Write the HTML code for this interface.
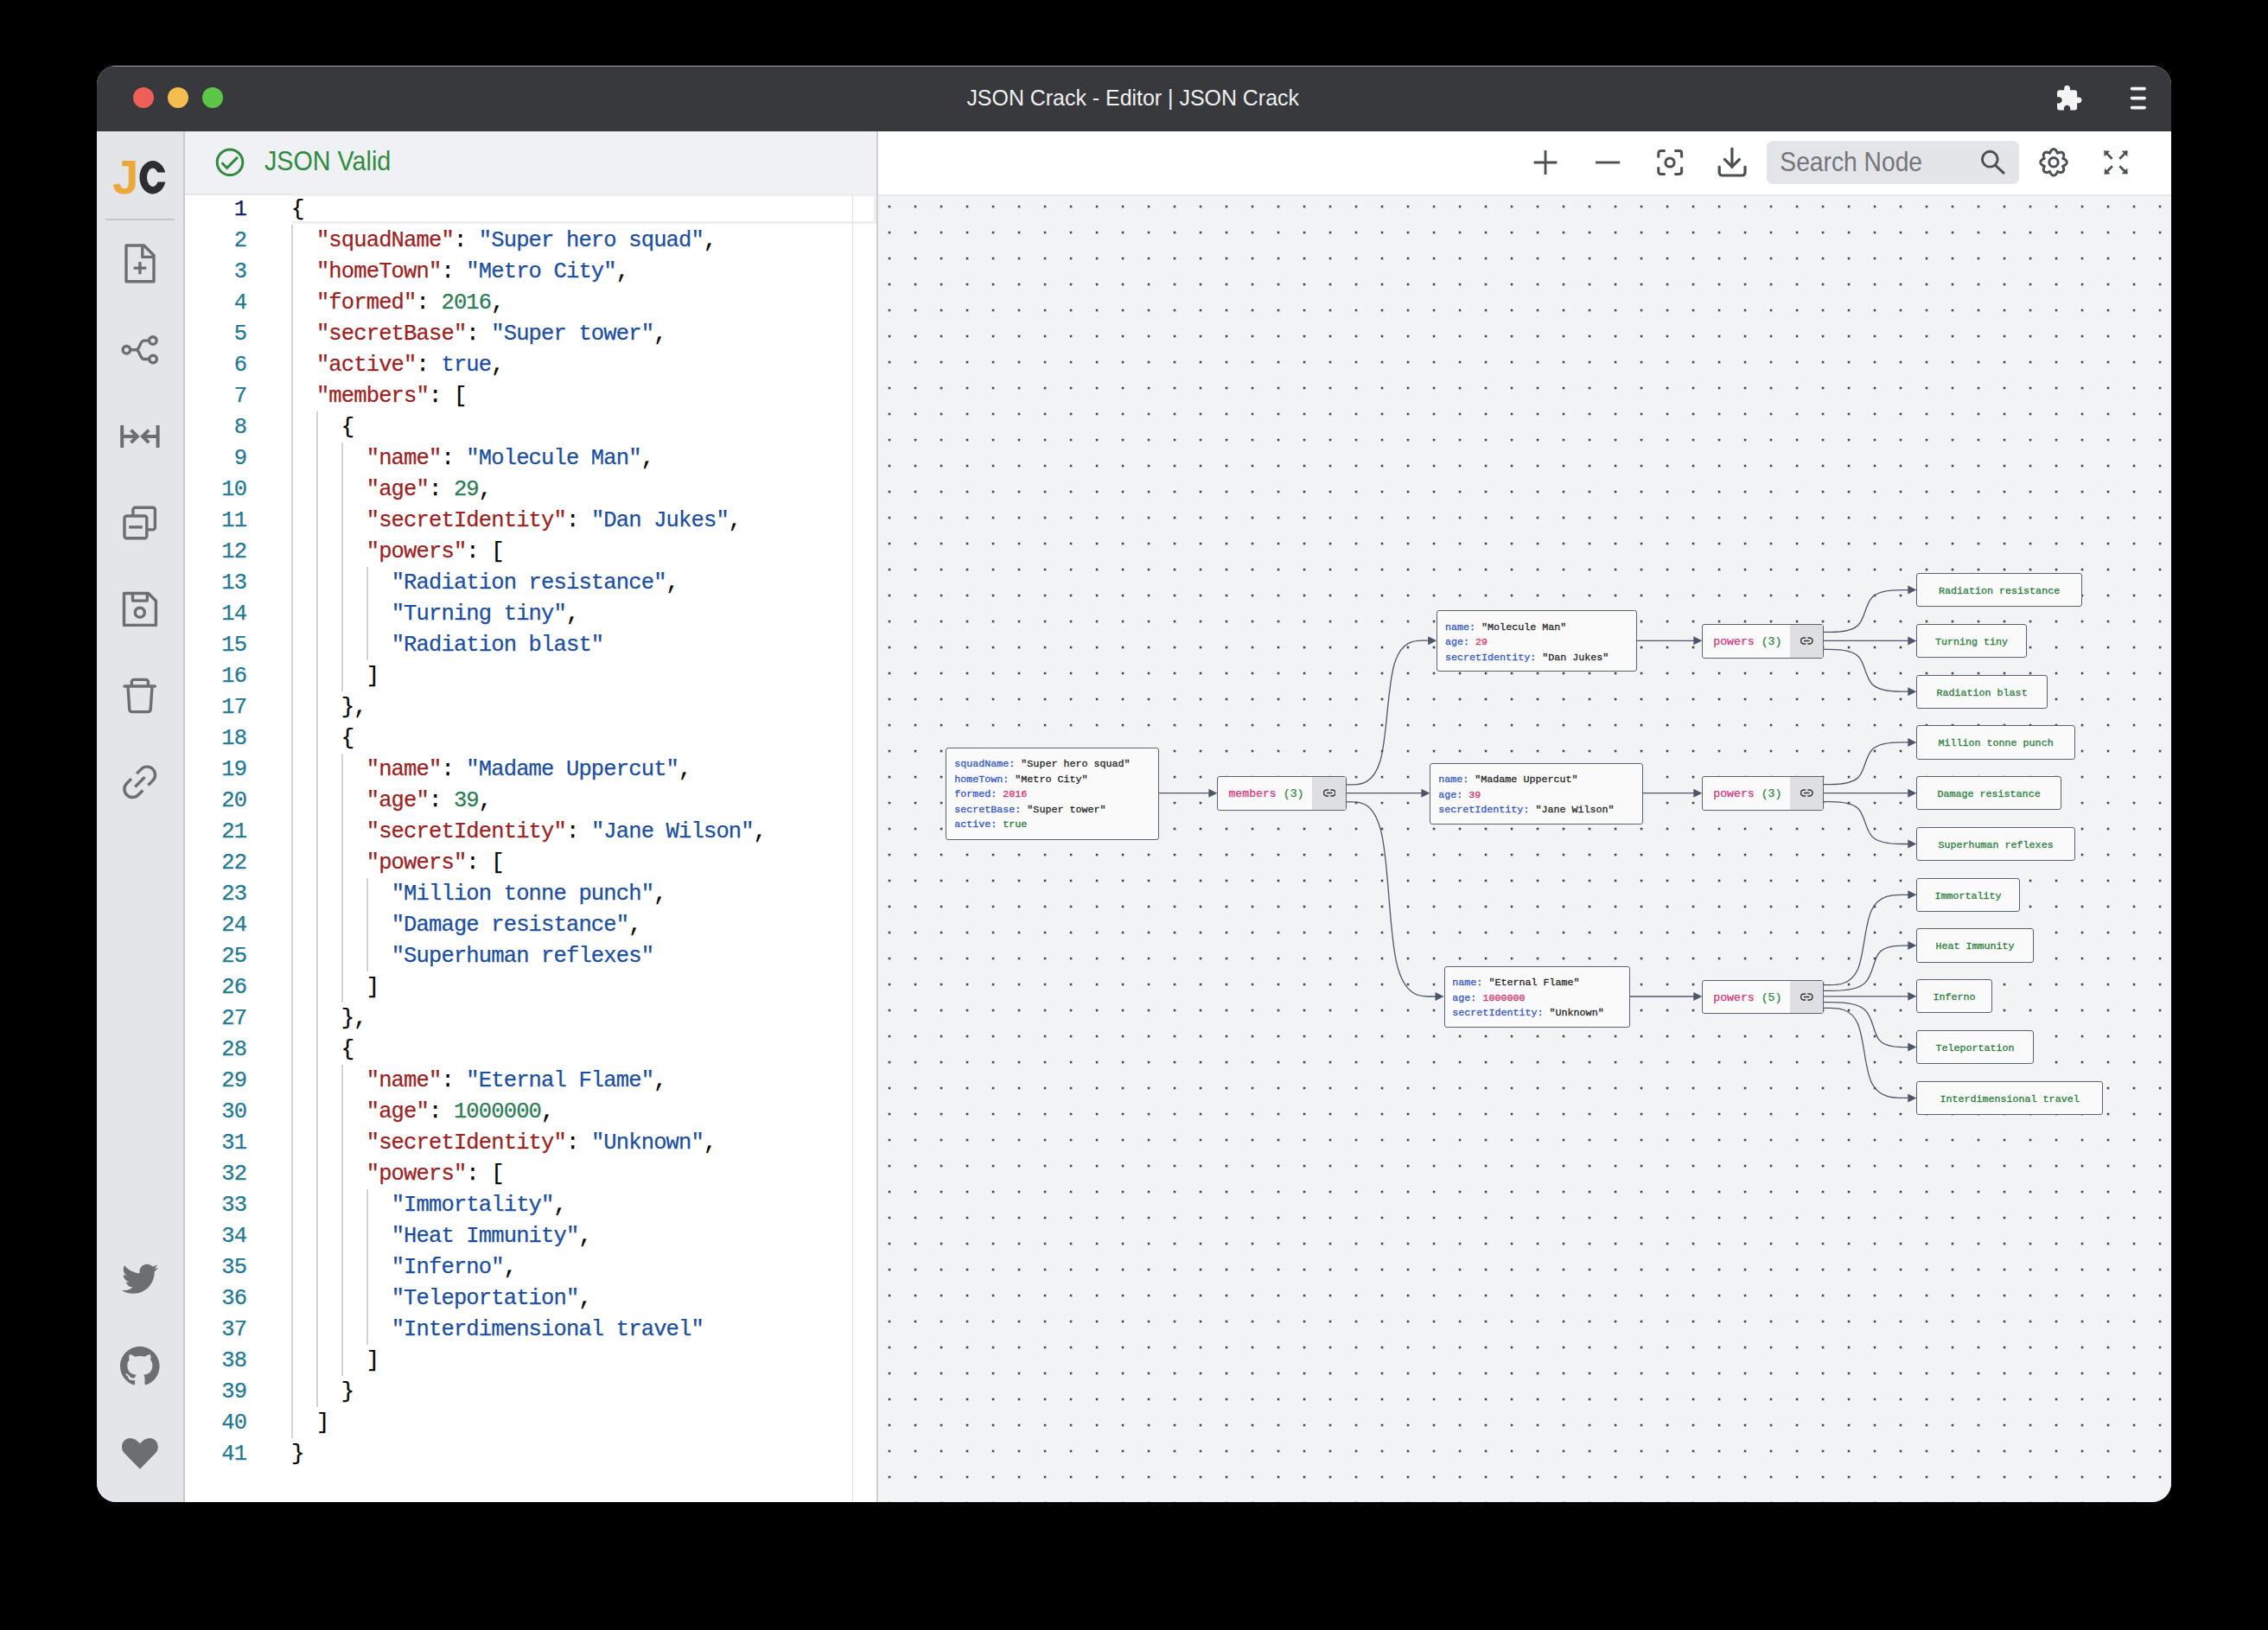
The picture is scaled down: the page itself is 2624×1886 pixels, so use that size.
<!DOCTYPE html><html><head><meta charset="utf-8"><style>
*{margin:0;padding:0;box-sizing:border-box}
html,body{width:2624px;height:1886px;background:#000;overflow:hidden;font-family:"Liberation Sans",sans-serif}
#win{position:absolute;left:112px;top:76px;width:2400px;height:1662px;border-radius:22px;overflow:hidden;background:#f1f3f5}
#tb{position:absolute;left:0;top:0;width:2400px;height:76px;background:#38393d;border-top:1.6px solid #a2a3a5}
.tl{position:absolute;top:24px;width:24px;height:24px;border-radius:50%}
#title{position:absolute;left:0;width:2400px;top:22px;text-align:center;color:#f2f2f2;font-size:25px;line-height:30px}
#side{position:absolute;left:0;top:76px;width:102px;height:1586px;background:#e4e5e8;border-right:2px solid #c9cacd}
#side svg{position:absolute}
#edhead{position:absolute;left:102px;top:76px;width:801px;height:74px;background:#f0f1f4;border-bottom:2px solid #e6e6e8}
#editor{position:absolute;left:102px;top:150px;width:801px;height:1512px;background:#fff}
#gtool{position:absolute;left:903px;top:76px;width:1497px;height:75px;background:#fff;border-bottom:2px solid #e6e7e9}
#divider{position:absolute;left:902px;top:76px;width:2px;height:1586px;background:#cfd0d3}
#canvas{position:absolute;left:904px;top:151px;width:1496px;height:1511px;background-color:#f1f3f5;
 }
#code{position:absolute;left:0;top:0;width:2624px;height:1886px;pointer-events:none}
.ln{position:absolute;left:337px;margin-top:1px;height:36px;line-height:36px;font-family:"Liberation Mono",monospace;font-size:25.5px;letter-spacing:-0.85px;-webkit-text-stroke:0.25px currentColor;white-space:pre;color:#000}
.num{position:absolute;left:200px;margin-top:1px;width:85.2px;text-align:right;height:36px;line-height:36px;font-family:"Liberation Mono",monospace;font-size:25.5px;letter-spacing:-0.85px;-webkit-text-stroke:0.25px currentColor;color:#237893}
.num.act{color:#0b216f}
i{font-style:normal}
.k{color:#9c2222}.s{color:#1b4e9e}.n{color:#2c7c55}.b{color:#1b4e9e}
.guide{position:absolute;width:1.6px;background:#d3d3d3}
.curline{position:absolute;left:338px;top:224px;width:676px;height:35px;border:3px solid #efefef;border-left:none}
.node{position:absolute;background:#fafafa;border:1.3px solid #5c6173;border-radius:3px;font-family:"Liberation Mono",monospace}
.obj{padding:10.8px 0 0 8.8px;-webkit-text-stroke:0.3px currentColor;font-size:11.7px;line-height:17.5px}
.row{white-space:pre;height:17.5px}
.gk{color:#3557c4}.gs{color:#262626}.gn{color:#d7346a}.gb{color:#2d7a3a}
.par{font-size:13.2px;line-height:40.5px;padding-left:12px;white-space:pre;-webkit-text-stroke:0.25px currentColor}
.pk{color:#d2347c}.pc{color:#2f8745}
.lk{position:absolute;right:0;top:0;width:38.5px;height:100%;background:#dedfe1;display:flex;align-items:center;justify-content:center}
.leaf{font-size:11.7px;color:#2c7d3c;text-align:center;line-height:40px;white-space:pre;-webkit-text-stroke:0.3px currentColor}
#edges{position:absolute;left:0;top:0}
</style></head><body>
<div id="win">
<div id="tb"><div class="tl" style="left:42px;background:#ee5f57"></div><div class="tl" style="left:82px;background:#f5bd4f"></div><div class="tl" style="left:122px;background:#5ec647"></div>
</div>
<div id="side"></div>
<div id="edhead"></div>
<div id="editor"></div>
<div id="gtool"></div>
<div id="canvas"><svg width="1496" height="1511" style="position:absolute;left:0;top:0"><defs><pattern id="dp" patternUnits="userSpaceOnUse" x="11.8" y="10.8" width="30" height="30"><rect x="0" y="0" width="2.4" height="2.4" fill="#2e2e2e"/></pattern></defs><rect width="1496" height="1511" fill="url(#dp)"/></svg></div>
<div style="position:absolute;left:1932px;top:87px;width:292px;height:50px;border-radius:7px;background:#e4e5e8"></div>
<div id="divider"></div>
</div>
<div id="code">
<div class="curline"></div>
<div class="guide" style="left:337.4px;top:260px;height:1404px"></div><div class="guide" style="left:366.3px;top:476px;height:1152px"></div><div class="guide" style="left:395.2px;top:512px;height:288px"></div><div class="guide" style="left:395.2px;top:872px;height:288px"></div><div class="guide" style="left:395.2px;top:1232px;height:360px"></div><div class="guide" style="left:424.1px;top:656px;height:108px"></div><div class="guide" style="left:424.1px;top:1016px;height:108px"></div><div class="guide" style="left:424.1px;top:1376px;height:180px"></div>
<div class="num act" style="top:224px">1</div><div class="num" style="top:260px">2</div><div class="num" style="top:296px">3</div><div class="num" style="top:332px">4</div><div class="num" style="top:368px">5</div><div class="num" style="top:404px">6</div><div class="num" style="top:440px">7</div><div class="num" style="top:476px">8</div><div class="num" style="top:512px">9</div><div class="num" style="top:548px">10</div><div class="num" style="top:584px">11</div><div class="num" style="top:620px">12</div><div class="num" style="top:656px">13</div><div class="num" style="top:692px">14</div><div class="num" style="top:728px">15</div><div class="num" style="top:764px">16</div><div class="num" style="top:800px">17</div><div class="num" style="top:836px">18</div><div class="num" style="top:872px">19</div><div class="num" style="top:908px">20</div><div class="num" style="top:944px">21</div><div class="num" style="top:980px">22</div><div class="num" style="top:1016px">23</div><div class="num" style="top:1052px">24</div><div class="num" style="top:1088px">25</div><div class="num" style="top:1124px">26</div><div class="num" style="top:1160px">27</div><div class="num" style="top:1196px">28</div><div class="num" style="top:1232px">29</div><div class="num" style="top:1268px">30</div><div class="num" style="top:1304px">31</div><div class="num" style="top:1340px">32</div><div class="num" style="top:1376px">33</div><div class="num" style="top:1412px">34</div><div class="num" style="top:1448px">35</div><div class="num" style="top:1484px">36</div><div class="num" style="top:1520px">37</div><div class="num" style="top:1556px">38</div><div class="num" style="top:1592px">39</div><div class="num" style="top:1628px">40</div><div class="num" style="top:1664px">41</div>
<div class="ln" style="top:224px">{</div><div class="ln" style="top:260px">  <i class="k">&quot;squadName&quot;</i>: <i class="s">&quot;Super hero squad&quot;</i>,</div><div class="ln" style="top:296px">  <i class="k">&quot;homeTown&quot;</i>: <i class="s">&quot;Metro City&quot;</i>,</div><div class="ln" style="top:332px">  <i class="k">&quot;formed&quot;</i>: <i class="n">2016</i>,</div><div class="ln" style="top:368px">  <i class="k">&quot;secretBase&quot;</i>: <i class="s">&quot;Super tower&quot;</i>,</div><div class="ln" style="top:404px">  <i class="k">&quot;active&quot;</i>: <i class="b">true</i>,</div><div class="ln" style="top:440px">  <i class="k">&quot;members&quot;</i>: [</div><div class="ln" style="top:476px">    {</div><div class="ln" style="top:512px">      <i class="k">&quot;name&quot;</i>: <i class="s">&quot;Molecule Man&quot;</i>,</div><div class="ln" style="top:548px">      <i class="k">&quot;age&quot;</i>: <i class="n">29</i>,</div><div class="ln" style="top:584px">      <i class="k">&quot;secretIdentity&quot;</i>: <i class="s">&quot;Dan Jukes&quot;</i>,</div><div class="ln" style="top:620px">      <i class="k">&quot;powers&quot;</i>: [</div><div class="ln" style="top:656px">        <i class="s">&quot;Radiation resistance&quot;</i>,</div><div class="ln" style="top:692px">        <i class="s">&quot;Turning tiny&quot;</i>,</div><div class="ln" style="top:728px">        <i class="s">&quot;Radiation blast&quot;</i></div><div class="ln" style="top:764px">      ]</div><div class="ln" style="top:800px">    },</div><div class="ln" style="top:836px">    {</div><div class="ln" style="top:872px">      <i class="k">&quot;name&quot;</i>: <i class="s">&quot;Madame Uppercut&quot;</i>,</div><div class="ln" style="top:908px">      <i class="k">&quot;age&quot;</i>: <i class="n">39</i>,</div><div class="ln" style="top:944px">      <i class="k">&quot;secretIdentity&quot;</i>: <i class="s">&quot;Jane Wilson&quot;</i>,</div><div class="ln" style="top:980px">      <i class="k">&quot;powers&quot;</i>: [</div><div class="ln" style="top:1016px">        <i class="s">&quot;Million tonne punch&quot;</i>,</div><div class="ln" style="top:1052px">        <i class="s">&quot;Damage resistance&quot;</i>,</div><div class="ln" style="top:1088px">        <i class="s">&quot;Superhuman reflexes&quot;</i></div><div class="ln" style="top:1124px">      ]</div><div class="ln" style="top:1160px">    },</div><div class="ln" style="top:1196px">    {</div><div class="ln" style="top:1232px">      <i class="k">&quot;name&quot;</i>: <i class="s">&quot;Eternal Flame&quot;</i>,</div><div class="ln" style="top:1268px">      <i class="k">&quot;age&quot;</i>: <i class="n">1000000</i>,</div><div class="ln" style="top:1304px">      <i class="k">&quot;secretIdentity&quot;</i>: <i class="s">&quot;Unknown&quot;</i>,</div><div class="ln" style="top:1340px">      <i class="k">&quot;powers&quot;</i>: [</div><div class="ln" style="top:1376px">        <i class="s">&quot;Immortality&quot;</i>,</div><div class="ln" style="top:1412px">        <i class="s">&quot;Heat Immunity&quot;</i>,</div><div class="ln" style="top:1448px">        <i class="s">&quot;Inferno&quot;</i>,</div><div class="ln" style="top:1484px">        <i class="s">&quot;Teleportation&quot;</i>,</div><div class="ln" style="top:1520px">        <i class="s">&quot;Interdimensional travel&quot;</i></div><div class="ln" style="top:1556px">      ]</div><div class="ln" style="top:1592px">    }</div><div class="ln" style="top:1628px">  ]</div><div class="ln" style="top:1664px">}</div>
<div style="position:absolute;left:986px;top:225px;width:1px;height:1513px;background:#e2e2e2"></div>
</div>
<svg id="edges" width="2624" height="1886"><g fill="none" stroke="#4f5569" stroke-width="1.3"><path d="M1340.50 917.70 L1399.40 917.70"/><path d="M1556.90 907.80 L1564.92 907.80 C1572.93 907.80 1588.97 907.80 1596.98 880.03 C1605.00 852.27 1605.00 796.73 1613.03 768.97 C1621.07 741.20 1637.13 741.20 1645.17 741.20 L1653.20 741.20"/><path d="M1556.90 917.70 L1645.40 917.70"/><path d="M1556.90 927.80 L1565.25 927.80 C1573.60 927.80 1590.30 927.80 1598.65 965.33 C1607.00 1002.87 1607.00 1077.93 1616.08 1115.47 C1625.17 1153.00 1643.33 1153.00 1652.42 1153.00 L1661.50 1153.00"/><path d="M1893.20 741.30 L1960.30 741.30"/><path d="M1900.70 917.70 L1960.30 917.70"/><path d="M1885.00 1153.00 L1960.30 1153.00"/><path d="M2109.50 731.40 L2117.58 731.40 C2125.67 731.40 2141.83 731.40 2149.92 723.27 C2158.00 715.13 2158.00 698.87 2166.38 690.73 C2174.77 682.60 2191.53 682.60 2199.92 682.60 L2208.30 682.60"/><path d="M2109.50 741.38 L2208.30 741.38"/><path d="M2109.50 751.40 L2117.58 751.40 C2125.67 751.40 2141.83 751.40 2149.92 759.53 C2158.00 767.65 2158.00 783.91 2166.38 792.03 C2174.77 800.16 2191.53 800.16 2199.92 800.16 L2208.30 800.16"/><path d="M2109.50 907.70 L2117.58 907.70 C2125.67 907.70 2141.83 907.70 2149.92 899.57 C2158.00 891.45 2158.00 875.19 2166.38 867.07 C2174.77 858.94 2191.53 858.94 2199.92 858.94 L2208.30 858.94"/><path d="M2109.50 917.72 L2208.30 917.72"/><path d="M2109.50 927.70 L2117.58 927.70 C2125.67 927.70 2141.83 927.70 2149.92 935.83 C2158.00 943.97 2158.00 960.23 2166.38 968.37 C2174.77 976.50 2191.53 976.50 2199.92 976.50 L2208.30 976.50"/><path d="M2109.50 1139.67 L2117.42 1139.67 C2125.33 1139.67 2141.17 1139.67 2149.08 1122.27 C2157.00 1104.87 2157.00 1070.08 2165.55 1052.68 C2174.10 1035.28 2191.20 1035.28 2199.75 1035.28 L2208.30 1035.28"/><path d="M2109.50 1146.33 L2119.08 1146.33 C2128.67 1146.33 2147.83 1146.33 2157.42 1137.62 C2167.00 1128.91 2167.00 1111.48 2173.88 1102.77 C2180.77 1094.06 2194.53 1094.06 2201.42 1094.06 L2208.30 1094.06"/><path d="M2109.50 1152.84 L2208.30 1152.84"/><path d="M2109.50 1159.67 L2119.08 1159.67 C2128.67 1159.67 2147.83 1159.67 2157.42 1168.33 C2167.00 1176.98 2167.00 1194.30 2173.88 1202.96 C2180.77 1211.62 2194.53 1211.62 2201.42 1211.62 L2208.30 1211.62"/><path d="M2109.50 1166.33 L2117.42 1166.33 C2125.33 1166.33 2141.17 1166.33 2149.08 1183.68 C2157.00 1201.02 2157.00 1235.71 2165.55 1253.06 C2174.10 1270.40 2191.20 1270.40 2199.75 1270.40 L2208.30 1270.40"/></g><g fill="#4f5569"><path d="M1408.4 917.7 L1398.4 912.7 L1398.4 922.7 Z"/><path d="M1662.2 741.2 L1652.2 736.2 L1652.2 746.2 Z"/><path d="M1654.4 917.7 L1644.4 912.7 L1644.4 922.7 Z"/><path d="M1670.5 1153.0 L1660.5 1148.0 L1660.5 1158.0 Z"/><path d="M1969.3 741.3 L1959.3 736.3 L1959.3 746.3 Z"/><path d="M1969.3 917.7 L1959.3 912.7 L1959.3 922.7 Z"/><path d="M1969.3 1153.0 L1959.3 1148.0 L1959.3 1158.0 Z"/><path d="M2217.3 682.6 L2207.3 677.6 L2207.3 687.6 Z"/><path d="M2217.3 741.4 L2207.3 736.4 L2207.3 746.4 Z"/><path d="M2217.3 800.2 L2207.3 795.2 L2207.3 805.2 Z"/><path d="M2217.3 858.9 L2207.3 853.9 L2207.3 863.9 Z"/><path d="M2217.3 917.7 L2207.3 912.7 L2207.3 922.7 Z"/><path d="M2217.3 976.5 L2207.3 971.5 L2207.3 981.5 Z"/><path d="M2217.3 1035.3 L2207.3 1030.3 L2207.3 1040.3 Z"/><path d="M2217.3 1094.1 L2207.3 1089.1 L2207.3 1099.1 Z"/><path d="M2217.3 1152.8 L2207.3 1147.8 L2207.3 1157.8 Z"/><path d="M2217.3 1211.6 L2207.3 1206.6 L2207.3 1216.6 Z"/><path d="M2217.3 1270.4 L2207.3 1265.4 L2207.3 1275.4 Z"/></g></svg>
<div class="node obj" style="left:1094.4px;top:864.6px;width:246.9px;height:107.0px"><div class="row"><i class="gk">squadName:</i> <i class="gs">"Super hero squad"</i></div><div class="row"><i class="gk">homeTown:</i> <i class="gs">"Metro City"</i></div><div class="row"><i class="gk">formed:</i> <i class="gn">2016</i></div><div class="row"><i class="gk">secretBase:</i> <i class="gs">"Super tower"</i></div><div class="row"><i class="gk">active:</i> <i class="gb">true</i></div></div><div class="node par" style="left:1408.4px;top:897.9px;width:149.3px;height:40.2px"><span class="pk">members</span> <span class="pc">(3)</span><div class="lk"><svg width="14.5" height="9" viewBox="0 0 16 10" style="margin-left:1px"><path d="M6.2 1.2H4.3a3.8 3.8 0 0 0 0 7.6h1.9M9.8 1.2h1.9a3.8 3.8 0 0 1 0 7.6H9.8M5 5h6" fill="none" stroke="#333" stroke-width="1.6" stroke-linecap="round"/></svg></div></div><div class="node obj" style="left:1662.2px;top:705.9px;width:231.8px;height:71.6px"><div class="row"><i class="gk">name:</i> <i class="gs">"Molecule Man"</i></div><div class="row"><i class="gk">age:</i> <i class="gn">29</i></div><div class="row"><i class="gk">secretIdentity:</i> <i class="gs">"Dan Jukes"</i></div></div><div class="node obj" style="left:1654.4px;top:882.5px;width:247.1px;height:71.3px"><div class="row"><i class="gk">name:</i> <i class="gs">"Madame Uppercut"</i></div><div class="row"><i class="gk">age:</i> <i class="gn">39</i></div><div class="row"><i class="gk">secretIdentity:</i> <i class="gs">"Jane Wilson"</i></div></div><div class="node obj" style="left:1670.5px;top:1117.7px;width:215.3px;height:71.6px"><div class="row"><i class="gk">name:</i> <i class="gs">"Eternal Flame"</i></div><div class="row"><i class="gk">age:</i> <i class="gn">1000000</i></div><div class="row"><i class="gk">secretIdentity:</i> <i class="gs">"Unknown"</i></div></div><div class="node par" style="left:1969.3px;top:721.7px;width:141.0px;height:39.9px"><span class="pk">powers</span> <span class="pc">(3)</span><div class="lk"><svg width="14.5" height="9" viewBox="0 0 16 10" style="margin-left:1px"><path d="M6.2 1.2H4.3a3.8 3.8 0 0 0 0 7.6h1.9M9.8 1.2h1.9a3.8 3.8 0 0 1 0 7.6H9.8M5 5h6" fill="none" stroke="#333" stroke-width="1.6" stroke-linecap="round"/></svg></div></div><div class="node par" style="left:1969.3px;top:897.9px;width:141.0px;height:40.0px"><span class="pk">powers</span> <span class="pc">(3)</span><div class="lk"><svg width="14.5" height="9" viewBox="0 0 16 10" style="margin-left:1px"><path d="M6.2 1.2H4.3a3.8 3.8 0 0 0 0 7.6h1.9M9.8 1.2h1.9a3.8 3.8 0 0 1 0 7.6H9.8M5 5h6" fill="none" stroke="#333" stroke-width="1.6" stroke-linecap="round"/></svg></div></div><div class="node par" style="left:1969.3px;top:1133.6px;width:141.0px;height:39.6px"><span class="pk">powers</span> <span class="pc">(5)</span><div class="lk"><svg width="14.5" height="9" viewBox="0 0 16 10" style="margin-left:1px"><path d="M6.2 1.2H4.3a3.8 3.8 0 0 0 0 7.6h1.9M9.8 1.2h1.9a3.8 3.8 0 0 1 0 7.6H9.8M5 5h6" fill="none" stroke="#333" stroke-width="1.6" stroke-linecap="round"/></svg></div></div><div class="node leaf" style="left:2217.3px;top:663.0px;width:191.5px;height:39.3px">Radiation resistance</div><div class="node leaf" style="left:2217.3px;top:721.7px;width:127.5px;height:39.3px">Turning tiny</div><div class="node leaf" style="left:2217.3px;top:780.5px;width:151.5px;height:39.3px">Radiation blast</div><div class="node leaf" style="left:2217.3px;top:839.3px;width:183.5px;height:39.3px">Million tonne punch</div><div class="node leaf" style="left:2217.3px;top:898.1px;width:167.5px;height:39.3px">Damage resistance</div><div class="node leaf" style="left:2217.3px;top:956.9px;width:183.5px;height:39.3px">Superhuman reflexes</div><div class="node leaf" style="left:2217.3px;top:1015.6px;width:119.5px;height:39.3px">Immortality</div><div class="node leaf" style="left:2217.3px;top:1074.4px;width:135.5px;height:39.3px">Heat Immunity</div><div class="node leaf" style="left:2217.3px;top:1133.2px;width:87.5px;height:39.3px">Inferno</div><div class="node leaf" style="left:2217.3px;top:1192.0px;width:135.5px;height:39.3px">Teleportation</div><div class="node leaf" style="left:2217.3px;top:1250.8px;width:215.5px;height:39.3px">Interdimensional travel</div>
<svg style="position:absolute;left:0;top:0" width="2624" height="1886"><g fill="none" stroke="#6c6e72" stroke-width="3.4" stroke-linejoin="round"><path d="M146 284 H166.5 L178 295.5 V325.8 H146 Z"/><path d="M164.8 284 V297.4 H178"/><path d="M161.9 303 V317.2 M154.6 310.1 H169.2"/><circle cx="146.4" cy="404.8" r="4.3"/><circle cx="176.9" cy="394.1" r="4.3"/><circle cx="177.1" cy="415.5" r="4.3"/><path d="M150.7 404.8 H157.5 C161.8 404.8 161.8 394.1 166.5 394.1 H172.6 M157.5 404.8 C161.8 404.8 161.8 415.5 166.5 415.5 H172.8"/><path stroke-width="4" stroke-linejoin="miter" d="M141.2 492 V518 M182.6 492 V518 M143 504.9 H157.5 M151.6 497.6 L158.9 504.9 L151.6 512.2 M180.8 504.9 H166.3 M172.2 497.6 L164.9 504.9 L172.2 512.2"/><rect x="144" y="597" width="25.8" height="25.8" rx="2.6"/><path d="M153.9 597 V590 A2.6 2.6 0 0 1 156.5 587.3 H176.8 A2.6 2.6 0 0 1 179.4 589.9 V610.3 A2.6 2.6 0 0 1 176.8 612.9 H169.8"/><path d="M149.2 609.9 H164.8"/><path d="M143.5 686.5 H171.6 L180.4 695.3 V723.4 H143.5 Z"/><path d="M153.5 686.5 V695.1 H170.3 V686.5"/><circle cx="161.8" cy="708.7" r="5.5"/><path stroke-linecap="round" d="M144 794 H179.3"/><path d="M152.3 794 V789 A2.6 2.6 0 0 1 154.9 786.4 H168.8 A2.6 2.6 0 0 1 171.4 789 V794"/><path d="M148 794 L149.8 820.8 A2.8 2.8 0 0 0 152.6 823.6 H171.4 A2.8 2.8 0 0 0 174.2 820.8 L176 794"/><path d="M171.45 908.45 L176.75 903.15 A9.4 9.4 0 0 0 163.45 889.85 L158.15 895.15 M151.95 901.15 L146.65 906.45 A9.4 9.4 0 0 0 159.95 919.75 L165.25 914.45 M156.3 910.5 L167.5 899.1"/></g><g fill="#6c6e72"><path transform="translate(141 1458.8) scale(0.082)" d="M459.37 151.716c.325 4.548.325 9.097.325 13.645 0 138.72-105.583 298.558-298.558 298.558-59.452 0-114.68-17.219-161.137-47.106 8.447.974 16.568 1.299 25.34 1.299 49.055 0 94.213-16.568 130.274-44.832-46.132-.975-84.792-31.188-98.112-72.772 6.498.974 12.995 1.624 19.818 1.624 9.421 0 18.843-1.3 27.614-3.573-48.081-9.747-84.143-51.98-84.143-102.985v-1.299c13.969 7.797 30.214 12.67 47.431 13.319-28.264-18.843-46.781-51.005-46.781-87.391 0-19.492 5.197-37.36 14.294-52.954 51.655 63.675 129.3 105.258 216.365 109.807-1.624-7.797-2.599-15.918-2.599-24.04 0-57.828 46.782-104.934 104.934-104.934 30.213 0 57.502 12.67 76.67 33.137 23.715-4.548 46.456-13.32 66.599-25.34-7.798 24.366-24.366 44.833-46.132 57.827 21.117-2.273 41.584-8.122 60.426-16.243-14.292 20.791-32.161 39.308-52.628 54.253z"/><path transform="translate(139 1557.9) scale(2.85)" d="M8 0C3.58 0 0 3.58 0 8c0 3.54 2.29 6.53 5.47 7.59.4.07.55-.17.55-.38 0-.19-.01-.82-.01-1.49-2.01.37-2.53-.49-2.69-.94-.09-.23-.48-.94-.82-1.13-.28-.15-.68-.52-.01-.53.63-.01 1.08.58 1.23.82.72 1.21 1.870.87 2.33.66.07-.52.28-.87.51-1.07-1.78-.2-3.64-.89-3.64-3.95 0-.87.31-1.59.82-2.15-.08-.2-.36-1.02.08-2.12 0 0 .67-.21 2.2.82.64-.18 1.32-.27 2-.27.68 0 1.36.09 2 .27 1.530-1.04 2.2-.82 2.2-.82.44 1.1.16 1.92.08 2.12.51.56.82 1.27.82 2.150 0 3.07-1.87 3.75-3.65 3.95.29.25.54.73.54 1.48 0 1.07-.01 1.93-.01 2.2 0 .21.15.46.55.38A8.013 8.013 0 0016 8c0-4.42-3.58-8-8-8z"/><path d="M161.9 1670.2 C158 1666 154.5 1664 150.6 1664 C145.2 1664 141 1668.4 141 1674 C141 1677 142.1 1679.6 144 1681.5 L161.9 1699.8 L179.8 1681.5 C181.7 1679.6 182.8 1677 182.8 1674 C182.8 1668.4 178.6 1664 173.2 1664 C169.3 1664 165.8 1666 161.9 1670.2 Z"/></g><text x="129.9" y="223.6" font-family="Liberation Sans" font-weight="bold" font-size="54.6" fill="#eca83b">J</text><path fill="#2b2d31" d="M191.3 199.4 A15.3 19.25 0 1 0 191.4 210.6 L182.5 210.6 A6.7 10.65 0 1 1 182.3 199.4 Z"/><path d="M122 254 H202" stroke="#c4c5c9" stroke-width="2"/><circle cx="266" cy="187.8" r="14.8" fill="none" stroke="#2f8a3f" stroke-width="3"/><path d="M257.6 189.3 L262.6 194.4 L273.9 182.9" fill="none" stroke="#2f8a3f" stroke-width="3" stroke-linecap="square"/><text x="305.96" y="196.90" font-family="Liberation Sans" font-size="32.00" font-weight="normal" fill="#2f8a3f" textLength="146.37" lengthAdjust="spacingAndGlyphs">JSON Valid</text><g fill="none" stroke="#4b4e53" stroke-width="2.8"><path d="M1788 174.1 V201.9 M1774.6 188 H1801.4"/><path d="M1846 188 H1874.2"/><path d="M1918.8 182.6 V177.2 A2.6 2.6 0 0 1 1921.4 174.6 H1926.7 M1937.3 174.6 H1943 A2.6 2.6 0 0 1 1945.6 177.2 V182.6 M1918.8 193.2 V198.8 A2.6 2.6 0 0 0 1921.4 201.4 H1926.7 M1937.3 201.4 H1943 A2.6 2.6 0 0 0 1945.6 198.8 V193.2" stroke-width="3"/><circle cx="1932" cy="188" r="5.1" stroke-width="3"/><path stroke-width="3.2" stroke-linecap="round" stroke-linejoin="round" d="M2003.9 172 V193.5 M1995.4 184.4 L2003.9 193 L2012.4 184.4 M1989.2 193 V199.8 A3.2 3.2 0 0 0 1992.4 203 H2015.8 A3.2 3.2 0 0 0 2019 199.8 V193"/><circle cx="2302.3" cy="184.2" r="8.9" stroke-width="2.9"/><path d="M2308.6 191.4 L2319 200.8" stroke-width="3"/><path stroke-width="3" d="M2391.20 187.80 L2391.19 188.07 L2391.15 188.33 L2391.09 188.59 L2391.01 188.85 L2390.90 189.10 L2390.77 189.35 L2390.62 189.59 L2390.44 189.83 L2390.25 190.06 L2390.04 190.28 L2389.82 190.49 L2389.58 190.69 L2389.32 190.88 L2389.05 191.05 L2388.78 191.22 L2388.49 191.38 L2388.20 191.53 L2387.90 191.67 L2387.61 191.80 L2387.31 191.92 L2387.02 192.03 L2386.75 192.14 L2386.67 192.33 L2386.79 192.60 L2386.91 192.89 L2387.03 193.18 L2387.15 193.48 L2387.26 193.79 L2387.36 194.10 L2387.45 194.41 L2387.53 194.73 L2387.59 195.04 L2387.64 195.36 L2387.67 195.67 L2387.68 195.98 L2387.67 196.28 L2387.65 196.58 L2387.60 196.87 L2387.54 197.15 L2387.46 197.41 L2387.35 197.67 L2387.23 197.91 L2387.09 198.14 L2386.93 198.35 L2386.75 198.55 L2386.55 198.73 L2386.34 198.89 L2386.11 199.03 L2385.87 199.15 L2385.61 199.26 L2385.35 199.34 L2385.07 199.40 L2384.78 199.45 L2384.48 199.47 L2384.18 199.48 L2383.87 199.47 L2383.56 199.44 L2383.24 199.39 L2382.93 199.33 L2382.61 199.25 L2382.30 199.16 L2381.99 199.06 L2381.68 198.95 L2381.38 198.83 L2381.09 198.71 L2380.80 198.59 L2380.53 198.47 L2380.34 198.55 L2380.23 198.82 L2380.12 199.11 L2380.00 199.41 L2379.87 199.70 L2379.73 200.00 L2379.58 200.29 L2379.42 200.58 L2379.25 200.85 L2379.08 201.12 L2378.89 201.38 L2378.69 201.62 L2378.48 201.84 L2378.26 202.05 L2378.03 202.24 L2377.79 202.42 L2377.55 202.57 L2377.30 202.70 L2377.05 202.81 L2376.79 202.89 L2376.53 202.95 L2376.27 202.99 L2376.00 203.00 L2375.73 202.99 L2375.47 202.95 L2375.21 202.89 L2374.95 202.81 L2374.70 202.70 L2374.45 202.57 L2374.21 202.42 L2373.97 202.24 L2373.74 202.05 L2373.52 201.84 L2373.31 201.62 L2373.11 201.38 L2372.92 201.12 L2372.75 200.85 L2372.58 200.58 L2372.42 200.29 L2372.27 200.00 L2372.13 199.70 L2372.00 199.41 L2371.88 199.11 L2371.77 198.82 L2371.66 198.55 L2371.47 198.47 L2371.20 198.59 L2370.91 198.71 L2370.62 198.83 L2370.32 198.95 L2370.01 199.06 L2369.70 199.16 L2369.39 199.25 L2369.07 199.33 L2368.76 199.39 L2368.44 199.44 L2368.13 199.47 L2367.82 199.48 L2367.52 199.47 L2367.22 199.45 L2366.93 199.40 L2366.65 199.34 L2366.39 199.26 L2366.13 199.15 L2365.89 199.03 L2365.66 198.89 L2365.45 198.73 L2365.25 198.55 L2365.07 198.35 L2364.91 198.14 L2364.77 197.91 L2364.65 197.67 L2364.54 197.41 L2364.46 197.15 L2364.40 196.87 L2364.35 196.58 L2364.33 196.28 L2364.32 195.98 L2364.33 195.67 L2364.36 195.36 L2364.41 195.04 L2364.47 194.73 L2364.55 194.41 L2364.64 194.10 L2364.74 193.79 L2364.85 193.48 L2364.97 193.18 L2365.09 192.89 L2365.21 192.60 L2365.33 192.33 L2365.25 192.14 L2364.98 192.03 L2364.69 191.92 L2364.39 191.80 L2364.10 191.67 L2363.80 191.53 L2363.51 191.38 L2363.22 191.22 L2362.95 191.05 L2362.68 190.88 L2362.42 190.69 L2362.18 190.49 L2361.96 190.28 L2361.75 190.06 L2361.56 189.83 L2361.38 189.59 L2361.23 189.35 L2361.10 189.10 L2360.99 188.85 L2360.91 188.59 L2360.85 188.33 L2360.81 188.07 L2360.80 187.80 L2360.81 187.53 L2360.85 187.27 L2360.91 187.01 L2360.99 186.75 L2361.10 186.50 L2361.23 186.25 L2361.38 186.01 L2361.56 185.77 L2361.75 185.54 L2361.96 185.32 L2362.18 185.11 L2362.42 184.91 L2362.68 184.72 L2362.95 184.55 L2363.22 184.38 L2363.51 184.22 L2363.80 184.07 L2364.10 183.93 L2364.39 183.80 L2364.69 183.68 L2364.98 183.57 L2365.25 183.46 L2365.33 183.27 L2365.21 183.00 L2365.09 182.71 L2364.97 182.42 L2364.85 182.12 L2364.74 181.81 L2364.64 181.50 L2364.55 181.19 L2364.47 180.87 L2364.41 180.56 L2364.36 180.24 L2364.33 179.93 L2364.32 179.62 L2364.33 179.32 L2364.35 179.02 L2364.40 178.73 L2364.46 178.45 L2364.54 178.19 L2364.65 177.93 L2364.77 177.69 L2364.91 177.46 L2365.07 177.25 L2365.25 177.05 L2365.45 176.87 L2365.66 176.71 L2365.89 176.57 L2366.13 176.45 L2366.39 176.34 L2366.65 176.26 L2366.93 176.20 L2367.22 176.15 L2367.52 176.13 L2367.82 176.12 L2368.13 176.13 L2368.44 176.16 L2368.76 176.21 L2369.07 176.27 L2369.39 176.35 L2369.70 176.44 L2370.01 176.54 L2370.32 176.65 L2370.62 176.77 L2370.91 176.89 L2371.20 177.01 L2371.47 177.13 L2371.66 177.05 L2371.77 176.78 L2371.88 176.49 L2372.00 176.19 L2372.13 175.90 L2372.27 175.60 L2372.42 175.31 L2372.58 175.02 L2372.75 174.75 L2372.92 174.48 L2373.11 174.22 L2373.31 173.98 L2373.52 173.76 L2373.74 173.55 L2373.97 173.36 L2374.21 173.18 L2374.45 173.03 L2374.70 172.90 L2374.95 172.79 L2375.21 172.71 L2375.47 172.65 L2375.73 172.61 L2376.00 172.60 L2376.27 172.61 L2376.53 172.65 L2376.79 172.71 L2377.05 172.79 L2377.30 172.90 L2377.55 173.03 L2377.79 173.18 L2378.03 173.36 L2378.26 173.55 L2378.48 173.76 L2378.69 173.98 L2378.89 174.22 L2379.08 174.48 L2379.25 174.75 L2379.42 175.02 L2379.58 175.31 L2379.73 175.60 L2379.87 175.90 L2380.00 176.19 L2380.12 176.49 L2380.23 176.78 L2380.34 177.05 L2380.53 177.13 L2380.80 177.01 L2381.09 176.89 L2381.38 176.77 L2381.68 176.65 L2381.99 176.54 L2382.30 176.44 L2382.61 176.35 L2382.93 176.27 L2383.24 176.21 L2383.56 176.16 L2383.87 176.13 L2384.18 176.12 L2384.48 176.13 L2384.78 176.15 L2385.07 176.20 L2385.35 176.26 L2385.61 176.34 L2385.87 176.45 L2386.11 176.57 L2386.34 176.71 L2386.55 176.87 L2386.75 177.05 L2386.93 177.25 L2387.09 177.46 L2387.23 177.69 L2387.35 177.93 L2387.46 178.19 L2387.54 178.45 L2387.60 178.73 L2387.65 179.02 L2387.67 179.32 L2387.68 179.62 L2387.67 179.93 L2387.64 180.24 L2387.59 180.56 L2387.53 180.87 L2387.45 181.19 L2387.36 181.50 L2387.26 181.81 L2387.15 182.12 L2387.03 182.42 L2386.91 182.71 L2386.79 183.00 L2386.67 183.27 L2386.75 183.46 L2387.02 183.57 L2387.31 183.68 L2387.61 183.80 L2387.90 183.93 L2388.20 184.07 L2388.49 184.22 L2388.78 184.38 L2389.05 184.55 L2389.32 184.72 L2389.58 184.91 L2389.82 185.11 L2390.04 185.32 L2390.25 185.54 L2390.44 185.77 L2390.62 186.01 L2390.77 186.25 L2390.90 186.50 L2391.01 186.75 L2391.09 187.01 L2391.15 187.27 L2391.19 187.53 L2391.20 187.80 Z"/><circle cx="2376" cy="187.8" r="5.2" stroke-width="3"/><path stroke-width="2.7" d="M2437.5 177.6 L2443.6 183.7 M2458.4 177.6 L2452.3 183.7 M2437.8 198.4 L2443.9 192.3 M2458.4 198.3 L2452.3 192.2"/></g><g fill="#4b4e53"><path d="M2434.2 174.3 L2441.2 174.8 L2434.7 181.3 Z M2461.7 174.3 L2454.7 174.8 L2461.2 181.3 Z M2434.6 201.8 L2441.6 201.3 L2435.1 194.8 Z M2461.7 201.6 L2454.7 201.1 L2461.2 194.6 Z"/></g><text x="2059.32" y="197.60" font-family="Liberation Sans" font-size="30.70" font-weight="normal" fill="#74767b" textLength="164.74" lengthAdjust="spacingAndGlyphs">Search Node</text><text x="1118.41" y="122.20" font-family="Liberation Sans" font-size="26.20" font-weight="normal" fill="#f0f0f0" textLength="384.55" lengthAdjust="spacingAndGlyphs">JSON Crack - Editor | JSON Crack</text><path fill="#f4f4f4" transform="translate(2377.3 97.5) scale(1.36)" d="M20.5 11H19V7c0-1.1-.9-2-2-2h-4V3.5C13 2.12 11.88 1 10.5 1S8 2.12 8 3.5V5H4c-1.1 0-1.99.9-1.990 2v3.8H3.5c1.49 0 2.7 1.21 2.7 2.7s-1.21 2.7-2.7 2.7H2V20c0 1.1.9 2 2 2h3.8v-1.5c0-1.49 1.21-2.7 2.7-2.7 1.49 0 2.7 1.21 2.7 2.7V22H17c1.1 0 2-.9 2-2v-4h1.5c1.38 0 2.5-1.12 2.5-2.5S21.880 11 20.5 11z"/><path d="M2466.5 102.6 H2481.2 M2466.5 113.6 H2481.2 M2466.5 124.6 H2481.2" stroke="#f4f4f4" stroke-width="3.6" stroke-linecap="round"/></svg>
</body></html>
